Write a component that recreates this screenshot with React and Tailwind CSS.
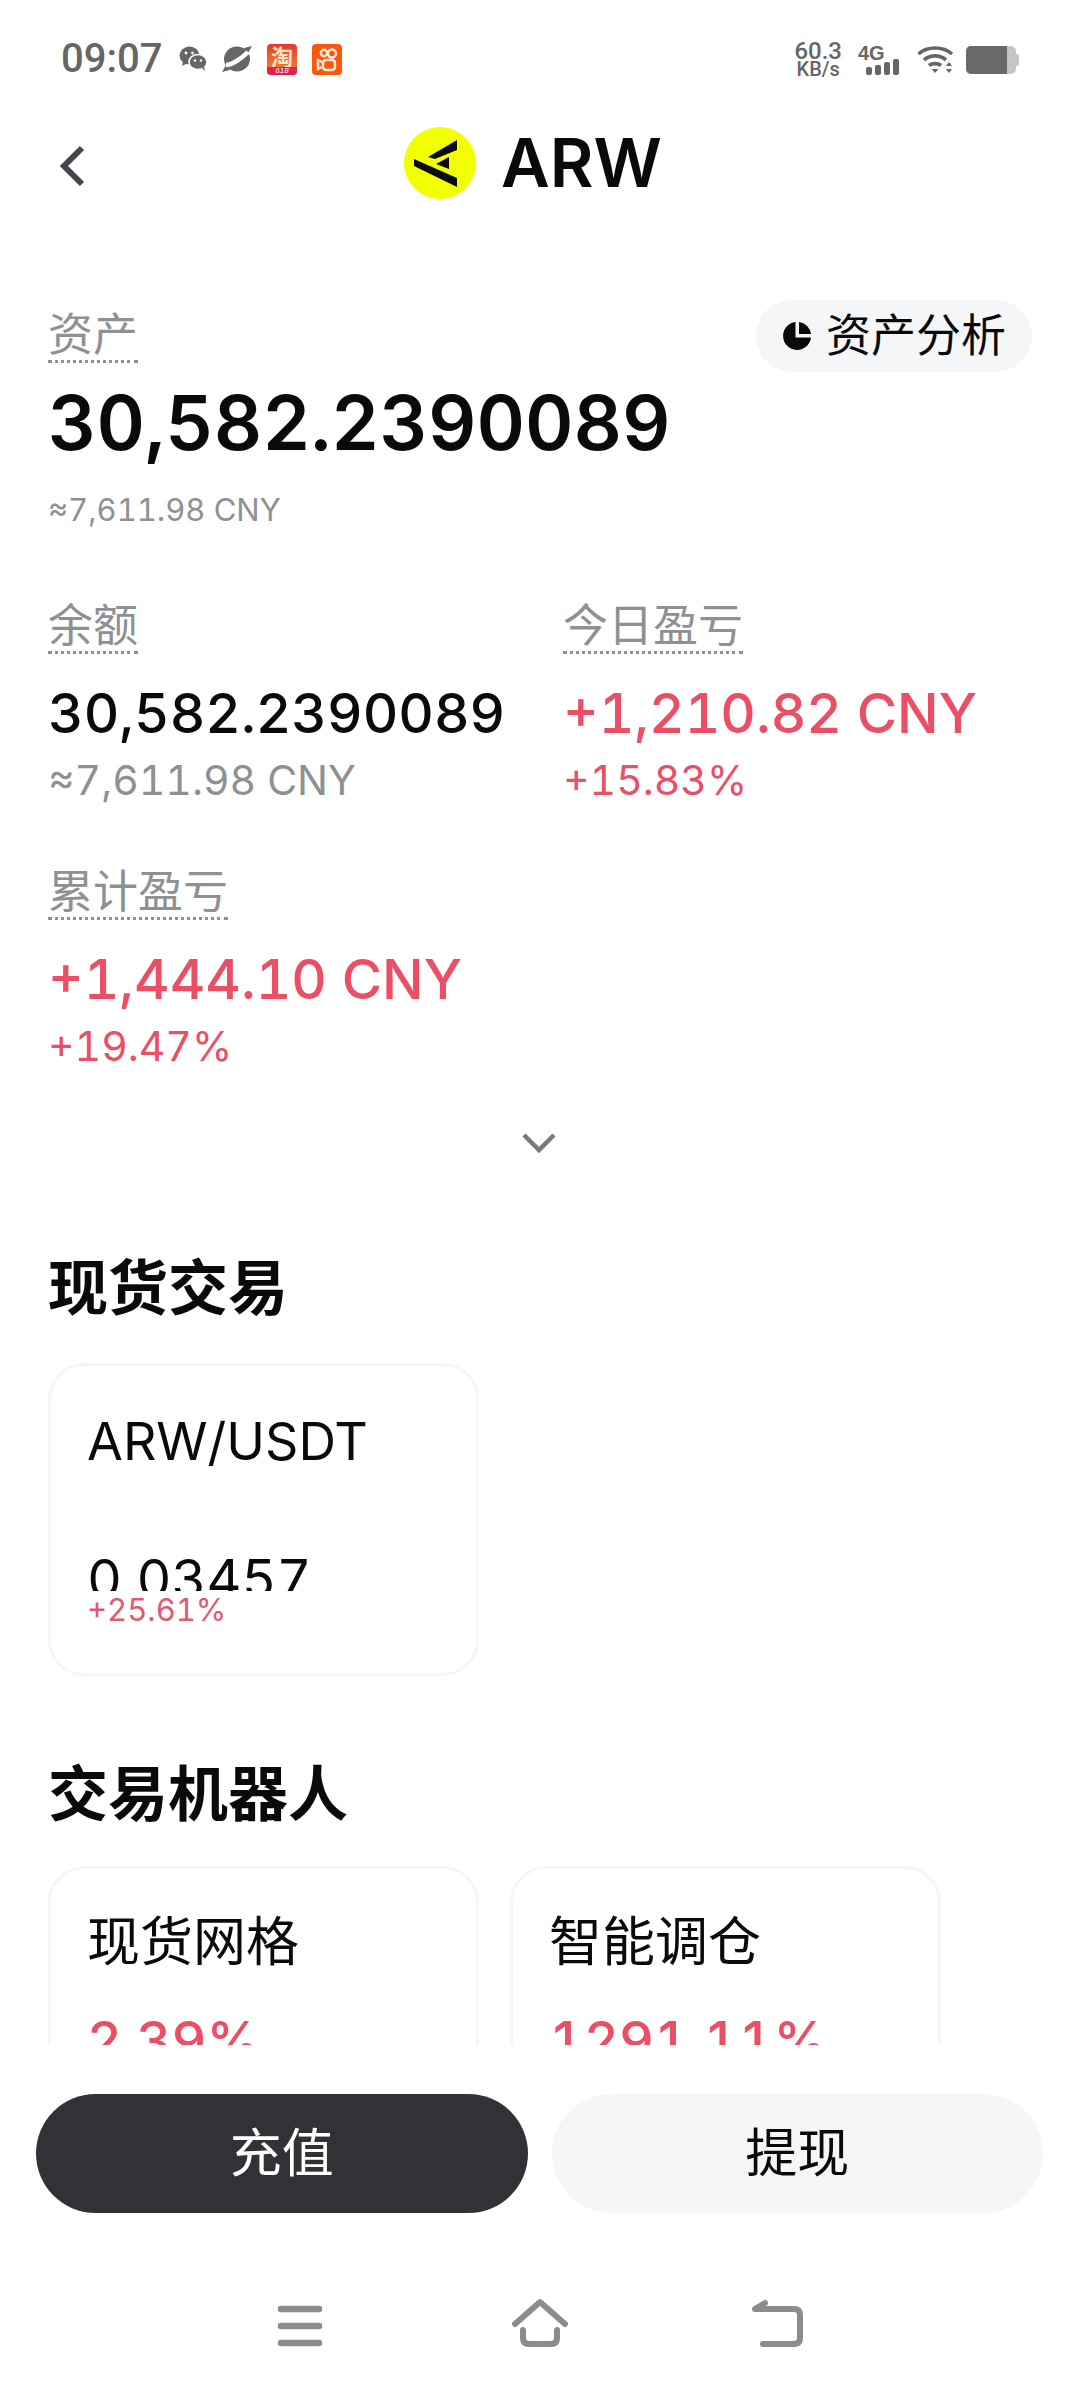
const latin = "font-['Inter','Noto_Sans_CJK_SC',sans-serif] tabular-nums"

/* ---------------- Status bar icons ---------------- */
function WeChatIcon() {
  return (
    <svg width="28" height="26" viewBox="0 0 28 26" fill="#666">
      <ellipse cx="10.5" cy="9.5" rx="10" ry="9" />
      <path d="M4 15 L3 20 L9 17 Z" />
      <ellipse cx="19" cy="16" rx="9" ry="7.5" stroke="#fff" strokeWidth="1.5" />
      <path d="M23 22 L26 25 L25 20 Z" />
      <circle cx="7" cy="7" r="1.4" fill="#fff" />
      <circle cx="13.5" cy="7" r="1.4" fill="#fff" />
      <circle cx="16" cy="14.5" r="1.2" fill="#fff" />
      <circle cx="22" cy="14.5" r="1.2" fill="#fff" />
    </svg>
  )
}

function PlanetIcon() {
  return (
    <svg width="30" height="28" viewBox="0 0 30 28">
      <ellipse cx="15" cy="14" rx="13" ry="12.5" fill="#666" />
      <path d="M22 3 L30 1 L26 8 Z M8 25 L0 27 L4 20 Z" fill="#666" />
      <path d="M4 20 C10 20 20 13 26 7" stroke="#fff" strokeWidth="4.5" fill="none" />
    </svg>
  )
}

function TaobaoIcon() {
  return (
    <div className="w-[30px] h-[31px] rounded-[4px] overflow-hidden bg-linear-to-b from-[#e8322c] to-[#f08a2c] flex flex-col items-center">
      <span className="h-[23px] text-[22px] leading-[23px] text-[#fde9c4] font-['Noto_Sans_CJK_SC',sans-serif] font-bold">淘</span>
      <span className="w-full h-[8px] bg-[#e3204f] text-[8px] leading-[8px] text-white text-center font-['Liberation_Sans',sans-serif] italic">618</span>
    </div>
  )
}

function KuaishouIcon() {
  return (
    <svg width="30" height="31" viewBox="0 0 30 31">
      <rect width="30" height="31" rx="4" fill="#f9580f" />
      <g fill="none" stroke="#ffe9d6" strokeWidth="2.4">
        <circle cx="12" cy="9" r="3.2" />
        <circle cx="20" cy="9.5" r="4" />
        <rect x="11" y="16" width="12" height="10" rx="3" />
        <path d="M10 18 L6 16 V25 L10 23" />
      </g>
    </svg>
  )
}

function SignalIcon() {
  return (
    <div className="relative w-[44px] h-[31px]">
      <span className="absolute left-[1px] top-[-1px] text-[20px] leading-[20px] font-bold text-[#666] font-['Liberation_Sans',sans-serif]">4G</span>
      <div className="absolute left-[9px] bottom-0 flex items-end gap-[3px]">
        <span className="w-[6px] h-[8px] rounded-[2px] bg-[#666]" />
        <span className="w-[6px] h-[10px] rounded-[2px] bg-[#666]" />
        <span className="w-[6px] h-[13px] rounded-[2px] bg-[#666]" />
        <span className="w-[6px] h-[16px] rounded-[2px] bg-[#666]" />
      </div>
    </div>
  )
}

function WifiIcon() {
  return (
    <svg width="40" height="30" viewBox="0 0 38 30" fill="none" stroke="#666" strokeWidth="3.6">
      <path d="M1.5 9 C10 1 26 1 35 9" />
      <path d="M7 15 C13 9.5 23 9.5 29 15" />
      <path d="M12 20.5 C15 18 21 18 24 20.5" />
      <path d="M14.5 24 H21.5 L18 28 Z" fill="#666" stroke="none" />
      <path d="M32 17 L35 21 H29 Z M29 24 H35 L32 28 Z" fill="#666" stroke="none" />
    </svg>
  )
}

function BatteryIcon() {
  return (
    <div className="flex items-center">
      <div className="w-[50px] h-[28px] rounded-[5px] overflow-hidden flex bg-[#c6c6c6]">
        <div className="w-[41px] h-full bg-[#696969]" />
      </div>
      <div className="w-[3px] h-[12px] rounded-r-[2px] bg-[#c6c6c6]" />
    </div>
  )
}

/* ---------------- Small parts ---------------- */
function Logo() {
  return (
    <svg width="72" height="72" viewBox="0 0 72 72">
      <circle cx="36" cy="36" r="36" fill="#f2ff00" />
      <polygon points="24,30 53,13 53,23 31,32" fill="#0b0b0b" />
      <polygon points="10,32 53,51 53,60 10,39" fill="#0b0b0b" />
      <polygon points="45,30 45,42 32,37" fill="#0b0b0b" />
    </svg>
  )
}

function Label({ children }) {
  return (
    <span className="inline-block text-[45px] leading-[50px] text-[#8e9193] border-b-[3px] border-dotted border-[#8e9193]">
      {children}
    </span>
  )
}

function Stat({ label, value, sub, color = "text-[#0a0a0a]", subColor = "text-[#8e9193]" }) {
  return (
    <div>
      <Label>{label}</Label>
      <div className={"mt-[27px] text-[55px] leading-[64px] font-medium whitespace-nowrap " + color}>{value}</div>
      <div className={"mt-[7px] text-[41px] leading-[56px] whitespace-nowrap " + subColor}>{sub}</div>
    </div>
  )
}

function Card({ title, titleSize, children, gap, pad }) {
  return (
    <div className="w-[431px] h-[313px] shrink-0 rounded-[36px] border-[3px] border-[#f5f6f7] bg-white pl-[36px]">
      <div className={pad + " " + titleSize + " leading-[60px] text-[#0a0a0a] whitespace-nowrap"}>{title}</div>
      <div className={gap}>{children}</div>
    </div>
  )
}

/* ---------------- Page ---------------- */
export default function App() {
  return (
    <div className={latin + " w-[1080px] h-[2388px] bg-white flex flex-col overflow-hidden"}>
      {/* Scrollable content */}
      <div className="h-[2045px] shrink-0 overflow-hidden">
        {/* Status bar */}
        <div className="h-[116px] pl-[61px] pr-[61px] flex items-start justify-between">
          <div className="pt-[42px] flex items-center">
            <span className="text-[40px] leading-[34px] text-[#666] font-medium w-[118px] font-['Roboto',sans-serif]">09:07</span>
            <div className="flex items-center gap-[15px]">
              <WeChatIcon />
              <PlanetIcon />
              <TaobaoIcon />
              <KuaishouIcon />
            </div>
          </div>
          <div className="pt-[41px] flex items-center gap-[15px]">
            <div className="flex flex-col items-center text-[#666] font-medium font-['Roboto',sans-serif]">
              <span className="text-[24px] leading-[20px]">60.3</span>
              <span className="text-[20px] leading-[17px]">KB/s</span>
            </div>
            <SignalIcon />
            <div className="flex items-center gap-[10px]">
              <WifiIcon />
              <BatteryIcon />
            </div>
          </div>
        </div>

        {/* Header */}
        <div className="relative h-[94px] flex items-center justify-center pr-[14px]">
          <svg className="absolute left-[57px] top-[28px]" width="30" height="44" viewBox="0 0 30 44" fill="none" stroke="#43464a" strokeWidth="6">
            <path d="M25 4 L7 22 L25 40" />
          </svg>
          <div className="flex items-center gap-[25px]">
            <Logo />
            <span className="text-[67px] leading-[72px] font-semibold text-[#0a0a0a]">ARW</span>
          </div>
        </div>

        <div className="pl-[48px]">
          {/* Total assets */}
          <div className="mt-[90px] pr-[48px] h-[72px] flex justify-between items-start">
            <div className="pt-[10px]">
              <Label>资产</Label>
            </div>
            <div className="h-[72px] w-[276px] rounded-full bg-[#f4f6f7] flex items-center pl-[26px] gap-[14px]">
              <svg width="30" height="30" viewBox="0 0 30 30" fill="#0a0a0a">
                <path d="M13.5 1 A14 14 0 1 0 29 16.5 H13.5 Z" />
                <path d="M17 1 A13.5 13.5 0 0 1 29 13 H17 Z" />
              </svg>
              <span className="text-[45px] leading-[50px] text-[#0a0a0a]">资产分析</span>
            </div>
          </div>
          <div className="mt-[11px] text-[75px] leading-[80px] font-semibold text-[#0a0a0a] whitespace-nowrap">30,582.2390089</div>
          <div className="mt-[27px] text-[31px] leading-[40px] text-[#8e9193]">≈7,611.98 CNY</div>

          {/* Stats */}
          <div className="mt-[71px] grid grid-cols-[515px_1fr] gap-y-[59px]">
            <Stat label="余额" value="30,582.2390089" sub="≈7,611.98 CNY" />
            <Stat label="今日盈亏" value="+1,210.82 CNY" sub="+15.83%" color="text-[#ea4f66]" subColor="text-[#ea4f66]" />
            <Stat label="累计盈亏" value="+1,444.10 CNY" sub="+19.47%" color="text-[#ea4f66]" subColor="text-[#ea4f66]" />
          </div>

          {/* Expand */}
          <div className="mt-[58px] pr-[50px] flex justify-center">
            <svg width="36" height="22" viewBox="0 0 36 22" fill="none" stroke="#77797c" strokeWidth="4.5">
              <path d="M3 3 L18 18 L33 3" />
            </svg>
          </div>

          {/* Spot */}
          <h2 className="mt-[98px] text-[60px] leading-[72px] font-bold text-[#0a0a0a]">现货交易</h2>
          <div className="mt-[39px]">
            <Card title="ARW/USDT" titleSize="text-[52px]" pad="pt-[46px]" gap="mt-[77px]">
              <div className="h-[42px] overflow-hidden text-[54px] leading-[60px] text-[#0a0a0a]">0.03457</div>
              <div className="mt-[1px] text-[31px] leading-[36px] text-[#e0596f]">+25.61%</div>
            </Card>
          </div>

          {/* Bots */}
          <h2 className="mt-[82px] text-[60px] leading-[72px] font-bold text-[#0a0a0a]">交易机器人</h2>
          <div className="mt-[36px] flex gap-[31px]">
            <Card title="现货网格" titleSize="text-[53px]" pad="pt-[43px]" gap="mt-[39px]">
              <div className="text-[54px] leading-[60px] font-medium text-[#ea4f66]">2.39%</div>
            </Card>
            <Card title="智能调仓" titleSize="text-[53px]" pad="pt-[43px]" gap="mt-[39px]">
              <div className="text-[54px] leading-[60px] font-medium text-[#ea4f66]">1291.11%</div>
            </Card>
          </div>
        </div>
      </div>

      {/* Footer actions */}
      <div className="flex-1 bg-white">
        <div className="pt-[49px] pl-[36px] pr-[37px] flex gap-[24px]">
          <button className="flex-1 h-[119px] rounded-full bg-[#313236] text-white text-[52px]">充值</button>
          <button className="flex-1 h-[119px] rounded-full bg-[#f4f6f8] text-[#0a0a0a] text-[52px]">提现</button>
        </div>

        {/* Navigation bar */}
        <div className="pt-[85px] flex justify-center gap-[180px]">
          <svg width="60" height="52" viewBox="0 0 60 52" fill="none" stroke="#8c8c8c" strokeWidth="6.5" strokeLinecap="round">
            <path d="M11 11 H49 M11 28 H49 M11 45 H49" />
          </svg>
          <svg width="60" height="52" viewBox="0 0 60 52" fill="none" stroke="#8c8c8c" strokeWidth="6" strokeLinecap="round" strokeLinejoin="round">
            <path d="M5 26 L30 4 L55 26" />
            <path d="M13 32 V40 Q13 46 19 46 H41 Q47 46 47 40 V32" />
          </svg>
          <svg width="60" height="52" viewBox="0 0 60 52" fill="none" stroke="#8c8c8c" strokeWidth="6" strokeLinecap="round" strokeLinejoin="round">
            <path d="M13 46 H44 Q50 46 50 40 V17 Q50 11 44 11 H5 L15 5" />
          </svg>
        </div>
      </div>
    </div>
  )
}
